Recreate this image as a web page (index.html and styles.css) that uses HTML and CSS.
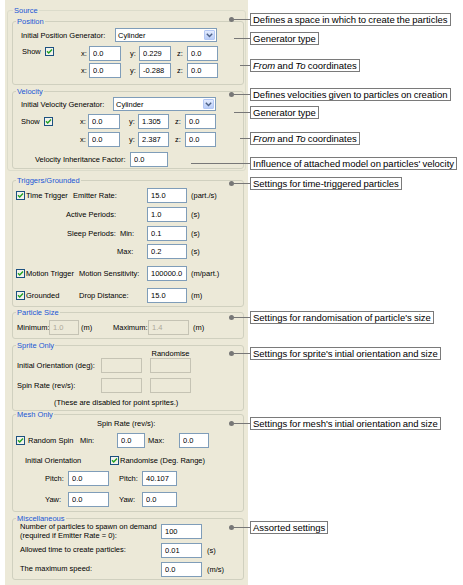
FILE: index.html
```html
<!DOCTYPE html>
<html>
<head>
<meta charset="utf-8">
<link rel="stylesheet" href="styles.css">
</head>
<body>
<div class="page">
  <div class="panel">
    <fieldset class="grp grp-source">
      <legend>Source</legend>
      <fieldset class="grp grp-position">
        <legend>Position</legend>
        <div class="gen-row">
          <span class="gen-label">Initial Position Generator:</span>
          <div class="select sel-pos"><span class="select-text">Cylinder</span><span class="select-btn"><svg width="7" height="5" viewBox="0 0 7 5"><path d="M0.8 0.8 L3.5 3.6 L6.2 0.8" fill="none" stroke="#4d6185" stroke-width="1.4"/></svg></span></div>
        </div>
        <div class="coord-row row-a">
          <div class="lead"><span class="show-text">Show</span><svg class="chk" viewBox="0 0 9 9"><rect x="0.5" y="0.5" width="8" height="8" fill="#f2f2ec" stroke="#1c5180"/><path d="M2 4.2 L3.7 6 L7 2.6" fill="none" stroke="#21a121" stroke-width="1.4"/></svg></div>
          <span class="ax-x">x:</span><input class="tb w32" value="0.0">
          <span class="ax-y">y:</span><input class="tb w32" value="0.229">
          <span class="ax-z">z:</span><input class="tb w31" value="0.0">
        </div>
        <div class="coord-row row-b">
          <div class="lead"></div>
          <span class="ax-x">x:</span><input class="tb w32" value="0.0">
          <span class="ax-y">y:</span><input class="tb w32" value="-0.288">
          <span class="ax-z">z:</span><input class="tb w31" value="0.0">
        </div>
      </fieldset>
      <fieldset class="grp grp-velocity">
        <legend>Velocity</legend>
        <div class="gen-row">
          <span class="gen-label">Initial Velocity Generator:</span>
          <div class="select sel-vel"><span class="select-text">Cylinder</span><span class="select-btn"><svg width="7" height="5" viewBox="0 0 7 5"><path d="M0.8 0.8 L3.5 3.6 L6.2 0.8" fill="none" stroke="#4d6185" stroke-width="1.4"/></svg></span></div>
        </div>
        <div class="coord-row row-a">
          <div class="lead"><span class="show-text">Show</span><svg class="chk" viewBox="0 0 9 9"><rect x="0.5" y="0.5" width="8" height="8" fill="#f2f2ec" stroke="#1c5180"/><path d="M2 4.2 L3.7 6 L7 2.6" fill="none" stroke="#21a121" stroke-width="1.4"/></svg></div>
          <span class="ax-x">x:</span><input class="tb w32" value="0.0">
          <span class="ax-y">y:</span><input class="tb w31" value="1.305">
          <span class="ax-z">z:</span><input class="tb w31" value="0.0">
        </div>
        <div class="coord-row row-b">
          <div class="lead"></div>
          <span class="ax-x">x:</span><input class="tb w32" value="0.0">
          <span class="ax-y">y:</span><input class="tb w31" value="2.387">
          <span class="ax-z">z:</span><input class="tb w31" value="0.0">
        </div>
        <div class="inh-row">
          <span class="inh-label">Velocity Inheritance Factor:</span><input class="tb w38" value="0.0">
        </div>
      </fieldset>
    </fieldset>

    <fieldset class="grp grp-top grp-trig">
      <legend>Triggers/Grounded</legend>
      <div class="trow">
        <div class="tlead"><svg class="chk" viewBox="0 0 9 9"><rect x="0.5" y="0.5" width="8" height="8" fill="#f2f2ec" stroke="#1c5180"/><path d="M2 4.2 L3.7 6 L7 2.6" fill="none" stroke="#21a121" stroke-width="1.4"/></svg><span class="cklabel">Time Trigger</span></div>
        <span class="tlabel pl7">Emitter Rate:</span><input class="tb w40" value="15.0"><span class="unit">(part./s)</span>
      </div>
      <div class="trow tr-gap4">
        <div class="tlead"></div>
        <span class="tlabel">Active Periods:</span><input class="tb w40" value="1.0"><span class="unit">(s)</span>
      </div>
      <div class="trow tr-gap4">
        <div class="tlead"></div>
        <span class="tlabel pl1">Sleep Periods:&nbsp; Min:</span><input class="tb w40" value="0.1"><span class="unit">(s)</span>
      </div>
      <div class="trow tr-gap3">
        <div class="tlead"></div>
        <span class="tlabel pl51">Max:</span><input class="tb w40" value="0.2"><span class="unit">(s)</span>
      </div>
      <div class="trow tr-gap7">
        <div class="tlead"><svg class="chk" viewBox="0 0 9 9"><rect x="0.5" y="0.5" width="8" height="8" fill="#f2f2ec" stroke="#1c5180"/><path d="M2 4.2 L3.7 6 L7 2.6" fill="none" stroke="#21a121" stroke-width="1.4"/></svg><span class="cklabel">Motion Trigger</span></div>
        <span class="tlabel pl13">Motion Sensitivity:</span><input class="tb w40" value="100000.0"><span class="unit">(m/part.)</span>
      </div>
      <div class="trow tr-gap7">
        <div class="tlead"><svg class="chk" viewBox="0 0 9 9"><rect x="0.5" y="0.5" width="8" height="8" fill="#f2f2ec" stroke="#1c5180"/><path d="M2 4.2 L3.7 6 L7 2.6" fill="none" stroke="#21a121" stroke-width="1.4"/></svg><span class="cklabel">Grounded</span></div>
        <span class="tlabel pl13">Drop Distance:</span><input class="tb w40" value="15.0"><span class="unit">(m)</span>
      </div>
    </fieldset>

    <fieldset class="grp grp-top grp-size">
      <legend>Particle Size</legend>
      <div class="size-row">
        <span class="lbl-min">Minimum:</span><input class="tb w30" value="1.0" disabled>
        <span class="unit-m">(m)</span>
        <span class="lbl-max">Maximum:</span><input class="tb w41" value="1.4" disabled>
        <span class="unit">(m)</span>
      </div>
    </fieldset>

    <fieldset class="grp grp-top grp-sprite">
      <legend>Sprite Only</legend>
      <div class="rand-head">Randomise</div>
      <div class="srow">
        <span class="slabel">Initial Orientation (deg):</span><input class="tb w41" disabled><input class="tb w41 s-second" disabled>
      </div>
      <div class="srow srow-gap">
        <span class="slabel">Spin Rate (rev/s):</span><input class="tb w41" disabled><input class="tb w41 s-second" disabled>
      </div>
      <div class="note">(These are disabled for point sprites.)</div>
    </fieldset>

    <fieldset class="grp grp-top grp-mesh">
      <legend>Mesh Only</legend>
      <div class="spin-head">Spin Rate (rev/s):</div>
      <div class="mspin-row">
        <div class="mlead"><svg class="chk" viewBox="0 0 9 9"><rect x="0.5" y="0.5" width="8" height="8" fill="#f2f2ec" stroke="#1c5180"/><path d="M2 4.2 L3.7 6 L7 2.6" fill="none" stroke="#21a121" stroke-width="1.4"/></svg><span class="cklabel-wide">Random Spin</span></div>
        <span class="lbl-smin">Min:</span><input class="tb w28" value="0.0">
        <span class="lbl-smax">Max:</span><input class="tb w30" value="0.0">
      </div>
      <div class="orient-row">
        <span class="orient-label">Initial Orientation</span><svg class="chk" viewBox="0 0 9 9"><rect x="0.5" y="0.5" width="8" height="8" fill="#f2f2ec" stroke="#1c5180"/><path d="M2 4.2 L3.7 6 L7 2.6" fill="none" stroke="#21a121" stroke-width="1.4"/></svg><span class="cklabel">Randomise (Deg. Range)</span>
      </div>
      <div class="prow">
        <span class="plabel">Pitch:</span><input class="tb w41" value="0.0">
        <span class="plabel plabel-2">Pitch:</span><input class="tb w35" value="40.107">
      </div>
      <div class="prow">
        <span class="plabel">Yaw:</span><input class="tb w41" value="0.0">
        <span class="plabel plabel-2">Yaw:</span><input class="tb w35" value="0.0">
      </div>
    </fieldset>

    <fieldset class="grp grp-top grp-misc">
      <legend>Miscellaneous</legend>
      <div class="mrow">
        <span class="mlabel">Number of particles to spawn on demand<br>(required if Emitter Rate = 0):</span><input class="tb w41" value="100">
      </div>
      <div class="mrow mrow-gap">
        <span class="mlabel">Allowed time to create particles:</span><input class="tb w41" value="0.01"><span class="unit-s">(s)</span>
      </div>
      <div class="mrow mrow-gap">
        <span class="mlabel">The maximum speed:</span><input class="tb w41" value="0.0"><span class="unit-s">(m/s)</span>
      </div>
    </fieldset>
  </div>

  <div class="callout c1"><span class="dot"></span><span class="line l16"></span><span class="box">Defines a space in which to create the particles</span></div>
  <div class="callout c2"><span class="line l16"></span><span class="box">Generator type</span></div>
  <div class="callout c3"><span class="line l10"></span><span class="box"><i>From</i> and <i>To</i> coordinates</span></div>
  <div class="callout c4"><span class="dot"></span><span class="line l16"></span><span class="box">Defines velocities given to particles on creation</span></div>
  <div class="callout c5"><span class="line l16"></span><span class="box">Generator type</span></div>
  <div class="callout c6"><span class="line l10"></span><span class="box"><i>From</i> and <i>To</i> coordinates</span></div>
  <div class="callout c7"><span class="line l59"></span><span class="box">Influence of attached model on particles' velocity</span></div>
  <div class="callout c8"><span class="dot"></span><span class="line l16"></span><span class="box">Settings for time-triggered particles</span></div>
  <div class="callout c9"><span class="dot"></span><span class="line l16"></span><span class="box">Settings for randomisation of particle's size</span></div>
  <div class="callout c10"><span class="dot"></span><span class="line l16"></span><span class="box">Settings for sprite's intial orientation and size</span></div>
  <div class="callout c11"><span class="dot"></span><span class="line l16"></span><span class="box">Settings for mesh's intial orientation and size</span></div>
  <div class="callout c12"><span class="dot"></span><span class="line l16"></span><span class="box">Assorted settings</span></div>
</div>
</body>
</html>
```

FILE: styles.css
```css
* { box-sizing: border-box; }
html, body { margin: 0; padding: 0; background: #fff; }
body { font-family: "Liberation Sans", Arial, sans-serif; }

.page { position: relative; width: 463px; height: 585px; overflow: hidden; }

.panel {
  width: 243px;
  height: 585px;
  margin-left: 5px;
  padding: 7px 2px 0 2px;
  background: #ece9d8;
  font-size: 7.5px;
  line-height: 9px;
  color: #000;
  white-space: nowrap;
}

.grp {
  margin: 0;
  padding: 0;
  min-width: 0;
  border: 1px solid #d0d0bf;
  border-radius: 3px;
}
.grp > legend {
  height: 7px;
  line-height: 7px;
  padding: 0 1px;
  margin-left: 3px;
  color: #2156d6;
  font-size: 7.5px;
}

.grp-source { padding: 4px 1px 1px 4px; border-color: #dcdccb; }
.grp-source > legend { margin-left: 1px; }
.grp-top { margin: 0 2px 0 5px; }

/* inputs */
.tb {
  font: inherit;
  font-size: 7.5px;
  height: 15px;
  margin: 0;
  padding: 0 0 0 3px;
  border: 1px solid #7f9db9;
  background: #fff;
  color: #000;
  outline: none;
  flex: none;
}
.tb:disabled { background: #ece9d8; border-color: #c5c3b4; color: #aca899; }
.w28 { width: 28px; }
.w30 { width: 30px; }
.w31 { width: 31px; }
.w32 { width: 32px; }
.w35 { width: 35px; }
.w38 { width: 38px; }
.w40 { width: 40px; }
.w41 { width: 41px; }

.chk { width: 9px; height: 9px; flex: none; display: block; }

/* select */
.select {
  display: flex;
  align-items: center;
  height: 14px;
  border: 1px solid #7f9db9;
  background: #fff;
  padding: 0 1px 0 2px;
  flex: none;
}
.select-text { flex: 1; }
.select-btn {
  width: 11px;
  height: 10px;
  border: 1px solid #b4c8f4;
  border-radius: 1px;
  background: linear-gradient(#e3ebfe, #b9cdf8);
  display: flex;
  align-items: center;
  justify-content: center;
}
.sel-pos { width: 102px; }
.sel-vel { width: 103px; }

/* Position / Velocity */
.grp-position { padding: 0 0 6px 0; }
.grp-velocity { margin-top: 3px; padding: 0 0 1px 0; }
.gen-row { display: flex; align-items: center; height: 14px; margin: 3px 0 0 8px; }
.grp-velocity .gen-row { margin-top: 2px; }
.gen-label { width: 94px; }
.grp-velocity .gen-label { width: 92px; }

.coord-row { display: flex; align-items: center; height: 15px; }
.row-a { margin-top: 4px; }
.row-b { margin-top: 2px; }
.grp-velocity .row-a { margin-top: 3px; }
.grp-velocity .row-b { margin-top: 3px; }
.lead {
  width: 68px;
  height: 9px;
  align-self: flex-start;
  margin-top: 1px;
  padding-left: 9px;
  display: flex;
  align-items: center;
  flex: none;
}
.grp-velocity .lead { width: 67px; margin-top: 3px; padding-left: 8px; }
.show-text { width: 23px; }
.ax-x { width: 8px; }
.ax-y { width: 9px; margin-left: 9px; }
.ax-z { width: 10px; margin-left: 6px; }

.inh-row { display: flex; align-items: center; height: 15px; margin: 5px 0 0 22px; }
.inh-label { width: 95px; }

/* Triggers */
.grp-trig { margin-top: 6px; padding: 4px 0 3px 3px; }
.grp-trig > legend { margin-left: 0; }
.trow { display: flex; align-items: center; height: 15px; }
.tr-gap3 { margin-top: 3px; }
.tr-gap4 { margin-top: 4px; }
.tr-gap7 { margin-top: 7px; }
.tlead { width: 50px; display: flex; align-items: center; flex: none; }
.cklabel { margin-left: 1px; }
.tlabel { width: 81px; flex: none; }
.pl1 { padding-left: 1px; }
.pl7 { padding-left: 7px; }
.pl13 { padding-left: 13px; }
.pl51 { padding-left: 51px; }
.unit { margin-left: 4px; }

/* Particle size */
.grp-size { margin-top: 2px; padding: 4px 0 3px 4px; }
.grp-size > legend { margin-left: -1px; }
.size-row { display: flex; align-items: center; height: 15px; }
.lbl-min { width: 32px; }
.unit-m { width: 32px; margin-left: 2px; }
.lbl-max { width: 35px; }

/* Sprite */
.grp-sprite { margin-top: 3px; padding: 0 0 3px 4px; }
.grp-sprite > legend { margin-left: -1px; }
.rand-head { width: 41px; margin-left: 133px; height: 9px; text-align: center; }
.srow { display: flex; align-items: center; height: 15px; }
.srow-gap { margin-top: 5px; }
.slabel { width: 84px; }
.s-second { margin-left: 8px; }
.note { height: 9px; margin: 5px 0 0 37px; }

/* Mesh */
.grp-mesh { padding: 0 0 4px 3px; }
.grp-mesh > legend { margin-left: 0; }
.spin-head { height: 9px; margin: 1px 0 0 81px; }
.mspin-row { display: flex; align-items: center; height: 15px; margin-top: 5px; }
.mlead { width: 64px; display: flex; align-items: center; flex: none; }
.cklabel-wide { margin-left: 3px; }
.lbl-smin { width: 37px; }
.lbl-smax { width: 31px; margin-left: 3px; }
.orient-row { display: flex; align-items: center; height: 9px; margin-top: 8px; }
.orient-label { width: 85px; margin-left: 9px; }
.prow { display: flex; align-items: center; height: 15px; margin-top: 6px; }
.plabel { width: 23px; margin-left: 29px; }
.plabel-2 { margin-left: 10px; }

/* Misc */
.grp-misc { margin-top: 3px; padding: 2px 0 2px 7px; }
.grp-misc > legend { margin-left: -4px; }
.mrow { display: flex; align-items: center; height: 15px; }
.mrow-gap { margin-top: 4px; }
.mlabel { width: 141px; line-height: 8.5px; }
.unit-s { margin-left: 5px; }

/* Callouts */
.callout {
  position: absolute;
  display: flex;
  align-items: center;
  font-size: 9.5px;
  line-height: 11px;
  color: #000;
}
.dot { width: 5px; height: 5px; border-radius: 50%; background: #777; flex: none; }
.line { height: 1px; background: #777; flex: none; }
.l10 { width: 10px; }
.l16 { width: 16px; }
.l59 { width: 59px; }
.box {
  border: 1px solid #7a7a7a;
  background: #fff;
  padding: 0 2px;
  white-space: nowrap;
  word-spacing: -0.5px;
}
.c1 { left: 229px; top: 13px; }
.c2 { left: 234px; top: 32px; }
.c3 { left: 240px; top: 59px; }
.c4 { left: 229px; top: 88px; }
.c5 { left: 234px; top: 106px; }
.c6 { left: 240px; top: 132px; }
.c7 { left: 191px; top: 157px; }
.c8 { left: 229px; top: 177px; }
.c9 { left: 229px; top: 311px; }
.c10 { left: 229px; top: 347px; }
.c11 { left: 229px; top: 417px; }
.c12 { left: 229px; top: 521px; }
```
